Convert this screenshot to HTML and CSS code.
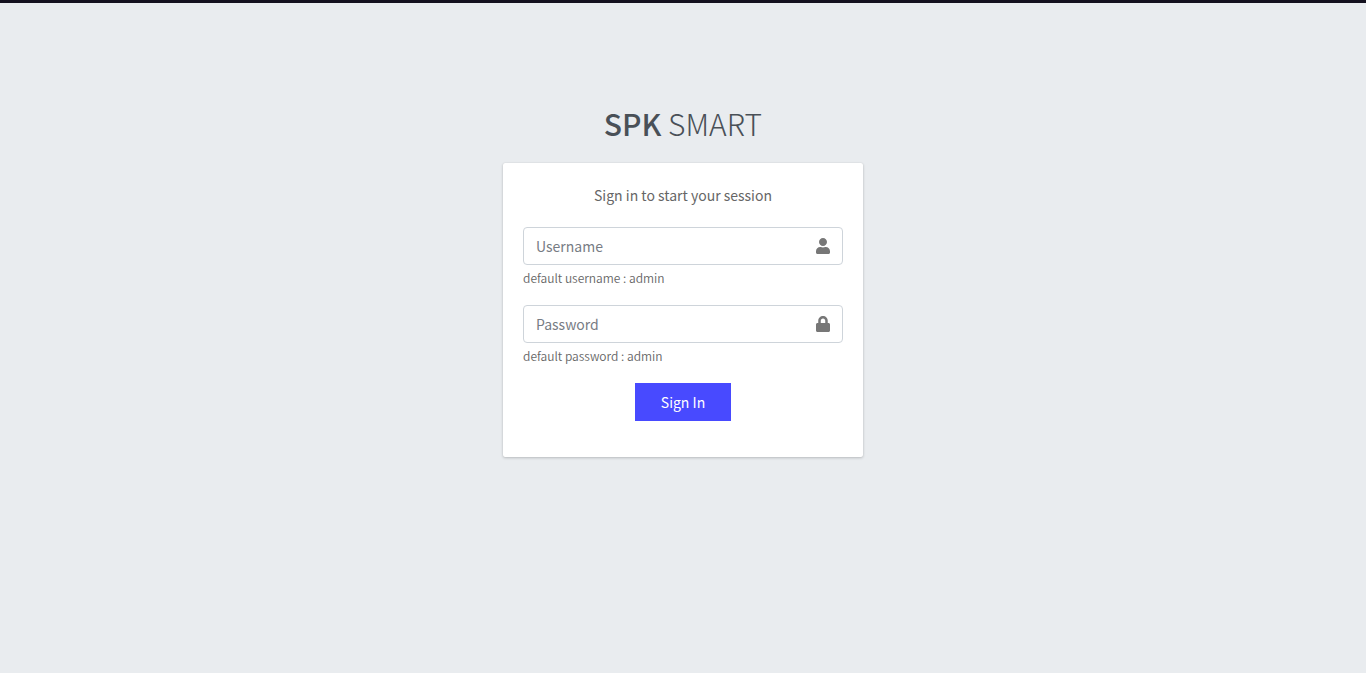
FILE: index.html
```html
<!DOCTYPE html>
<html lang="en">
<head>
<meta charset="utf-8">
<meta name="viewport" content="width=device-width, initial-scale=1">
<title>SPK SMART</title>
<link rel="stylesheet" href="styles.css">
</head>
<body class="login-page">
<main class="login-box">
  <h1 class="login-logo"><a href="#"><b>SPK</b> SMART</a></h1>
  <section class="card">
    <p class="login-msg">Sign in to start your session</p>
    <form class="login-form">
      <div class="field">
        <div class="input-group">
          <input class="input" id="username" type="text" placeholder="Username" aria-label="Username" aria-describedby="username-hint">
          <label class="input-icon" for="username">
            <svg viewBox="0 0 448 512" width="14" height="16" aria-hidden="true"><path d="M224 256c70.700 0 128-57.300 128-128S294.700 0 224 0 96 57.300 96 128s57.300 128 128 128zm89.600 32h-16.700c-22.200 10.200-46.900 16-72.900 16s-50.600-5.800-72.900-16h-16.700C60.200 288 0 348.200 0 422.400V464c0 26.500 21.500 48 48 48h352c26.500 0 48-21.500 48-48v-41.600c0-74.200-60.200-134.400-134.400-134.400z"/></svg>
          </label>
        </div>
        <small class="hint" id="username-hint">default username : admin</small>
      </div>
      <div class="field">
        <div class="input-group">
          <input class="input" id="password" type="password" placeholder="Password" aria-label="Password" aria-describedby="password-hint">
          <label class="input-icon" for="password">
            <svg viewBox="0 0 448 512" width="14" height="16" aria-hidden="true"><path d="M400 224h-24v-72C376 68.200 307.800 0 224 0S72 68.200 72 152v72H48c-26.500 0-48 21.500-48 48v192c0 26.500 21.500 48 48 48h352c26.500 0 48-21.500 48-48V272c0-26.500-21.500-48-48-48zm-104 0H152v-72c0-39.700 32.300-72 72-72s72 32.300 72 72v72z"/></svg>
          </label>
        </div>
        <small class="hint" id="password-hint">default password : admin</small>
      </div>
      <button class="submit" type="submit">Sign In</button>
    </form>
  </section>
</main>
</body>
</html>
```

FILE: styles.css
```css
* {
  box-sizing: border-box;
}

body {
  margin: 0;
  font-family: "Source Sans Pro", "Noto Sans CJK SC", sans-serif;
  font-size: 14px;
  line-height: 24px;
  color: #666;
}

.login-page {
  min-height: 100vh;
  padding: 96px 16px 32px;
  border-top: 3px solid #14111f;
  background: #e9ecef;
}

.login-box {
  max-width: 360px;
  margin: 0 auto;
}

.login-logo {
  margin: 0 0 16px;
  font-size: 30px;
  font-weight: 200;
  line-height: 48px;
  text-align: center;
}

.login-logo a {
  color: #495057;
  text-decoration: none;
}

.login-logo b {
  font-weight: 500;
}

.card {
  padding: 20px 20px 36px;
  border-radius: 2px;
  background: #fff;
  box-shadow: 0 0 1px rgba(0, 0, 0, 0.13), 0 1px 3px rgba(0, 0, 0, 0.2);
}

.login-msg {
  margin: 0 0 20px;
  text-align: center;
}

.login-form {
  display: flex;
  flex-direction: column;
  gap: 16px;
}

.field {
  display: flex;
  flex-direction: column;
}

.input-group {
  display: flex;
  height: 38px;
  border: 1px solid #ced4da;
  border-radius: 4px;
  background: #fff;
}

.input {
  flex: 1;
  min-width: 0;
  padding: 0 12px;
  border: 0;
  outline: 0;
  background: transparent;
  font: inherit;
  color: #495057;
}

.input::placeholder {
  color: #777c84;
  opacity: 1;
}

.input-icon {
  display: flex;
  align-items: center;
  padding: 0 12px;
}

.input-icon svg {
  fill: #777;
}

.hint {
  margin: 3px 0 1px;
  font-size: 12px;
  font-weight: 350;
  line-height: 20px;
}

.submit {
  align-self: center;
  width: 96px;
  height: 38px;
  padding: 0;
  border: 0;
  background: #484aff;
  color: #fff;
  font: inherit;
  cursor: pointer;
}
```
